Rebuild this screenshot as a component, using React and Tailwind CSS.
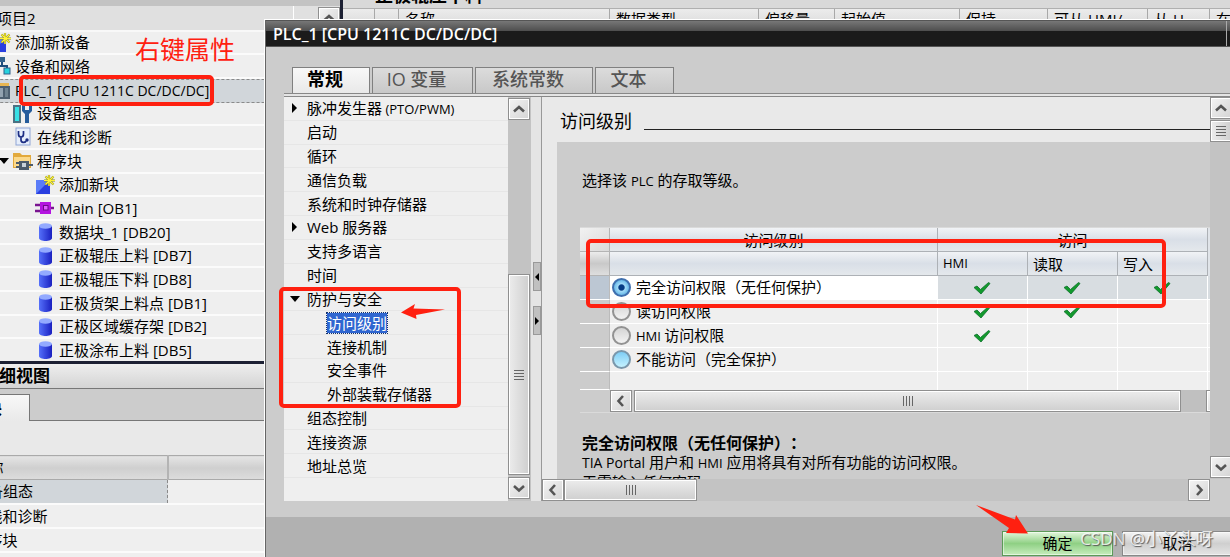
import React, { useState } from "react";
import clsx from "clsx";

const treeItems = [
  { label: "添加新设备", icon: "new", level: 1 },
  { label: "设备和网络", icon: "network", level: 1 },
  { label: "PLC_1 [CPU 1211C DC/DC/DC]", icon: "plc", level: 1, selected: true },
  { label: "设备组态", icon: "config", level: 2 },
  { label: "在线和诊断", icon: "diag", level: 2 },
  { label: "程序块", icon: "folder", level: 2, open: true },
  { label: "添加新块", icon: "new", level: 3 },
  { label: "Main [OB1]", icon: "ob", level: 3 },
  { label: "数据块_1 [DB20]", icon: "db", level: 3 },
  { label: "正极辊压上料 [DB7]", icon: "db", level: 3 },
  { label: "正极辊压下料 [DB8]", icon: "db", level: 3 },
  { label: "正极货架上料点 [DB1]", icon: "db", level: 3 },
  { label: "正极区域缓存架 [DB2]", icon: "db", level: 3 },
  { label: "正极涂布上料 [DB5]", icon: "db", level: 3 },
];

const navItems = [
  { label: "脉冲发生器", latin: "(PTO/PWM)", arrow: "right" },
  { label: "启动" },
  { label: "循环" },
  { label: "通信负载" },
  { label: "系统和时钟存储器" },
  { label: "Web 服务器", arrow: "right" },
  { label: "支持多语言" },
  { label: "时间" },
  { label: "防护与安全", arrow: "down" },
  { label: "访问级别", child: true, selected: true },
  { label: "连接机制", child: true },
  { label: "安全事件", child: true },
  { label: "外部装载存储器", child: true },
  { label: "组态控制" },
  { label: "连接资源" },
  { label: "地址总览" },
];

const levels = [
  { id: "full", label: "完全访问权限（无任何保护）", checks: [true, true, true] },
  { id: "read", label: "读访问权限", checks: [true, true, false] },
  { id: "hmi", latin: "HMI", label: "访问权限", checks: [true, false, false] },
  { id: "none", label: "不能访问（完全保护）", checks: [false, false, false] },
];

const editorColumns = [
  { label: "", width: "w-[32px]" },
  { label: "", width: "w-[24px]" },
  { label: "名称", width: "w-[211px]" },
  { label: "数据类型", width: "w-[149px]" },
  { label: "偏移量", width: "w-[76px]" },
  { label: "起始值", width: "w-[125px]" },
  { label: "保持", width: "w-[88px]" },
  { label: "可从 HMI/", width: "w-[100px]" },
  { label: "从 H", width: "w-[62px]" },
  { label: "在", width: "w-[60px]" },
];

const TreeIcon = ({ type }) => {
  if (type === "new") {
    return (
      <svg width="20" height="20" viewBox="0 0 20 20" className="shrink-0">
        <rect x="1" y="5" width="14" height="14" fill="#2a3fe0" />
        <path d="M1 5h14L1 19z" fill="#5a7cf8" />
        <path d="M14 0v11M9 5.500h11M10.500 1.500l8 8M18.500 1.500l-8 8" stroke="#8a8a20" strokeWidth="2.200" />
        <path d="M14 0v11M9 5.500h11M10.500 1.500l8 8M18.500 1.500l-8 8" stroke="#fff23a" strokeWidth="1.200" />
      </svg>
    );
  }
  if (type === "network") {
    return (
      <svg width="20" height="20" viewBox="0 0 20 20" className="shrink-0">
        <path d="M11 3v7M5 14v-4h11v5" fill="none" stroke="#1d4c7c" strokeWidth="2" />
        <rect x="8" y="1" width="6" height="5" fill="#32608c" />
        <rect x="2" y="12" width="6" height="6" fill="#32608c" />
        <rect x="13" y="12" width="6" height="6" fill="#27d3de" stroke="#32608c" />
      </svg>
    );
  }
  if (type === "plc") {
    return (
      <svg width="20" height="20" viewBox="0 0 20 20" className="shrink-0">
        <path d="M2 5l3-3h13v14H2z" fill="#e8b652" />
        <rect x="7" y="5" width="12" height="13" fill="#4e6070" />
        <rect x="9" y="7" width="3" height="9" fill="#93a3b0" />
        <rect x="14" y="7" width="3" height="9" fill="#708390" />
      </svg>
    );
  }
  if (type === "config") {
    return (
      <svg width="20" height="20" viewBox="0 0 20 20" className="shrink-0">
        <rect x="0" y="1" width="8" height="18" fill="#4b7183" />
        <rect x="2" y="3" width="4" height="14" fill="#37e0e6" />
        <path d="M9 1v6l3 3v9h4v-9l3-3V1l-3 1v4h-4V2z" fill="#245c9c" />
      </svg>
    );
  }
  if (type === "diag") {
    return (
      <svg width="20" height="20" viewBox="0 0 20 20" className="shrink-0">
        <rect x="3" y="1" width="14" height="17" fill="#e6eefb" stroke="#8fa5d6" />
        <path d="M5.500 4v3c0 4 5 4 5 0V4M8 10v3c0 3 4 3 5 1" fill="none" stroke="#1c2d84" strokeWidth="1.700" />
        <circle cx="14" cy="13" r="1.700" fill="#1c2d84" />
      </svg>
    );
  }
  if (type === "folder") {
    return (
      <svg width="20" height="20" viewBox="0 0 20 20" className="shrink-0">
        <path d="M0 2h7l2 2h9v13H0z" fill="#e2a93c" />
        <path d="M1 6h16v10H1z" fill="#fbd98b" />
        <rect x="6" y="10" width="10" height="9" fill="#4c5b6b" />
        <rect x="9" y="12" width="4" height="4" fill="#c8d1da" />
        <path d="M3 12h3M3 16h3M16 14h4" stroke="#4c5b6b" strokeWidth="2" />
      </svg>
    );
  }
  if (type === "ob") {
    return (
      <svg width="20" height="20" viewBox="0 0 20 20" className="shrink-0">
        <path d="M0 7h6M0 13h6M14 10h5" stroke="#7a1490" strokeWidth="2.400" />
        <rect x="5" y="4" width="11" height="12" fill="#b414e0" />
        <rect x="8.500" y="7.500" width="4.500" height="4.500" fill="#e05cff" stroke="#6e0c88" />
      </svg>
    );
  }
  return (
    <svg width="20" height="20" viewBox="0 0 20 20" className="shrink-0">
      <defs>
        <linearGradient id="cylinder">
          <stop offset="0" stopColor="#5570fa" />
          <stop offset="1" stopColor="#1a20c0" />
        </linearGradient>
      </defs>
      <path d="M4 4v12c0 4 13 4 13 0V4z" fill="url(#cylinder)" />
      <ellipse cx="10.500" cy="4" rx="6.500" ry="2.800" fill="#93aaff" />
    </svg>
  );
};

const Check = () => (
  <svg width="18" height="14" viewBox="0 0 18 14" className="mx-auto block">
    <path d="M1 6.500l3-1.500 3.500 3.500L15.500 1.500l1.500 1L8 13z" fill="#129a2c" stroke="#0c6f2c" strokeWidth="0.800" />
  </svg>
);

const Triangle = ({ down }) => (
  <svg width="10" height="10" viewBox="0 0 10 10" className="shrink-0">
    <path d={down ? "M0 2h10L5 8z" : "M2 0v10l5-5z"} fill="#000" />
  </svg>
);

const chevrons = {
  up: "M5 12.500l5-4.500 5 4.500",
  down: "M5 8l5 4.500L15 8",
  left: "M12 5l-4.500 5 4.500 5",
  right: "M8 5l4.500 5L8 15",
};

const ScrollButton = ({ dir, className }) => (
  <button
    type="button"
    aria-label={dir}
    className={clsx(
      "flex h-[22px] w-[22px] shrink-0 items-center justify-center border border-[#8f8f8f] bg-linear-to-br from-[#f4f4f4] to-[#d4d4d4] inset-ring inset-ring-white",
      className
    )}
  >
    <svg width="20" height="20" viewBox="0 0 20 20" className="shrink-0">
      <path d={chevrons[dir]} fill="none" stroke="#555" strokeWidth="2.600" />
    </svg>
  </button>
);

const Grip = ({ vertical }) => (
  <span className={clsx("flex gap-[2px]", vertical ? "flex-col" : "flex-row")}>
    {[0, 1, 2, 3].map((n) => (
      <i key={n} className={clsx("bg-[#666]", vertical ? "h-px w-[10px]" : "h-[10px] w-px")} />
    ))}
  </span>
);

const Thumb = ({ vertical, className }) => (
  <div
    className={clsx(
      "flex items-center justify-center border border-[#8f8f8f] from-[#ececec] to-[#cfcfcf] inset-ring inset-ring-white",
      vertical ? "w-[22px] bg-linear-to-r" : "h-[22px] bg-linear-to-b",
      className
    )}
  >
    <Grip vertical={vertical} />
  </div>
);

const RedBox = ({ className }) => (
  <div className={clsx("pointer-events-none absolute z-10 rounded-[5px] border-4 border-[#ff2010]", className)} />
);

const ProjectTree = () => (
  <aside className="-ml-10 flex w-[380px] shrink-0 flex-col overflow-hidden bg-[#c3c3c3] pt-[6px]">
    <div className="relative h-[355px] shrink-0 overflow-hidden">
      <div className="flex h-[357px] flex-col text-[15px]">
        <div className="flex min-h-0 flex-1 items-center border-b-2 border-[#f8f8f8] bg-[#e0e0e0] pl-[37px]">
          <span className="flex-1">项目2</span>
          <span className="h-full w-[25px] border-l border-white" />
          <ScrollButton dir="up" />
        </div>
        <ul className="flex min-h-0 flex-[14] flex-col">
          {treeItems.map((item) => (
            <li
              key={item.label}
              className={clsx(
                "flex min-h-0 flex-1 items-center whitespace-nowrap",
                item.selected
                  ? "border-y border-dashed border-[#8a8a8a] bg-[#d1d6da] text-[14px] leading-[20px] font-medium"
                  : "border-b-2 border-[#fbfbfb] bg-[#efefef]",
                item.level === 1 && "gap-1 pl-[31px]",
                item.level === 2 && "gap-1 pl-[39px]",
                item.level === 3 && "gap-1 pl-[75px]"
              )}
            >
              {item.level === 2 && (
                <span className="flex w-[10px] shrink-0">{item.open && <Triangle down />}</span>
              )}
              <TreeIcon type={item.icon} />
              <span>{item.label}</span>
            </li>
          ))}
        </ul>
      </div>
      <RedBox className="top-[69px] left-[59px] h-[31px] w-[195px]" />
      <p className="absolute top-[25px] left-[175px] text-[25px] text-[#ff2010]">右键属性</p>
    </div>
    <div className="h-[3px] shrink-0 bg-[#1c2033]" />
    <h2 className="flex h-[25px] shrink-0 items-center border-b border-[#777] bg-linear-to-b from-[#eee] to-[#d4d4d4] pl-[22px] text-[17px] font-bold">
      详细视图
    </h2>
    <div className="flex h-[32px] shrink-0 items-end bg-[#ccc]">
      <button type="button" className="h-[27px] w-[70px] border-t border-r border-[#777] bg-linear-to-b from-[#f8f8f8] to-[#e9e9e9] pl-[12px] text-left text-[15px] font-bold">
        模块
      </button>
      <span className="flex-1 border-b border-[#777]" />
    </div>
    <div className="h-[34px] shrink-0 bg-[#e9e9e9]" />
    <table className="w-full table-fixed border-collapse text-left text-[15px]">
      <thead>
        <tr className="h-[24px] border-y border-[#aaa] bg-linear-to-b from-[#e4e4e4] via-[#cfcfcf] to-[#dcdcdc]">
          <th className="w-[207px] border-r-2 border-[#b4b4b4] p-0 pl-[13px] leading-[20px] font-normal">名称</th>
          <th className="p-0" />
        </tr>
      </thead>
      <tbody>
        {["设备组态", "在线和诊断", "程序块", "工艺对象"].map((name, i) => (
          <tr key={name} className="h-[24px] border-b-2 border-[#fbfbfb] bg-[#efefef]">
            <td className={clsx("p-0 pl-[12px] leading-[20px]", i === 0 && "border border-dashed border-[#8a8a8a] bg-[#d1d6da]")}>
              {name}
            </td>
            <td className="p-0" />
          </tr>
        ))}
      </tbody>
    </table>
  </aside>
);

const Editor = () => (
  <main className="min-w-0 flex-1 overflow-hidden bg-[#efefef]">
    <div className="flex h-[8px] items-end overflow-hidden bg-[#d9d9d9] pl-[32px]">
      <h1 className="pb-[4px] text-[18px] leading-[18px] font-bold whitespace-nowrap">正极辊压下料</h1>
    </div>
    <div className="flex h-[24px] border-t border-[#b0b0b0] bg-linear-to-b from-[#ececec] to-[#d5d5d5] text-[15px]">
      {editorColumns.map((col, i) => (
        <div key={i} className={clsx("shrink-0 border-r border-[#a8a8a8] pl-[6px] leading-[20px] whitespace-nowrap", col.width)}>
          {col.label}
        </div>
      ))}
    </div>
  </main>
);

const SettingsNav = () => (
  <div className="relative flex w-[247px] shrink-0">
    <nav className="flex-1 bg-[#efefef]">
      <ul className="flex h-[381px] flex-col text-[15px]">
        {navItems.map((item) => (
          <li
            key={item.label}
            className={clsx(
              "flex min-h-0 flex-1 items-center border-b border-[#e6e6e6] whitespace-nowrap",
              item.child ? "pl-[43px]" : "pl-[6px]"
            )}
          >
            {!item.child && (
              <span className="flex w-[17px] shrink-0">
                {item.arrow && <Triangle down={item.arrow === "down"} />}
              </span>
            )}
            <a
              href="#"
              className={clsx(
                "leading-[20px]",
                item.selected && "bg-[#2f66d0] text-white outline outline-dotted outline-[#10306c]"
              )}
            >
              {item.label}
              {item.latin && <span className="text-[13px]"> {item.latin}</span>}
            </a>
          </li>
        ))}
      </ul>
    </nav>
    <div className="flex w-[23px] flex-col bg-[#c3c3c3] pt-px pb-[2px]">
      <ScrollButton dir="up" />
      <div className="flex-1" />
      <Thumb vertical className="mb-[2px] h-[201px]" />
      <ScrollButton dir="down" />
    </div>
    <RedBox className="top-[190px] left-[-5px] h-[121px] w-[182px]" />
    <svg width="46" height="18" viewBox="0 0 46 18" className="absolute top-[206px] left-[116px] z-10">
      <path d="M1 9.500L15 1l-1.500 4.500L45 6.500 16 12l.5 4z" fill="#ff2010" />
    </svg>
  </div>
);

const Splitter = () => (
  <div className="flex w-[11px] shrink-0 flex-col gap-[15px] border-r border-[#999] bg-[#e4e4e4] pt-[165px] pl-[2px]">
    <button type="button" aria-label="collapse" className="h-[29px] w-[8px] border border-[#999] bg-[#c0c0c0]">
      <svg width="6" height="8" viewBox="0 0 6 8"><path d="M5 0v8L1 4z" /></svg>
    </button>
    <button type="button" aria-label="expand" className="h-[29px] w-[8px] border border-[#999] bg-[#c0c0c0]">
      <svg width="6" height="8" viewBox="0 0 6 8"><path d="M1 0v8l4-4z" /></svg>
    </button>
  </div>
);

const headCell =
  "border-r border-[#adb1b6] bg-linear-to-b from-[#f1f3f6] via-[#d9dfe7] to-[#e4e8ec] p-0 font-normal";

const AccessTable = () => {
  const [level, setLevel] = useState("full");

  return (
    <div className="relative ml-[23px] border-y border-[#dadada] text-[15px]">
      <table className="w-full table-fixed border-separate border-spacing-0">
        <colgroup>
          <col className="w-[30px]" />
          <col />
          <col className="w-[90px]" />
          <col className="w-[90px]" />
          <col className="w-[90px]" />
          <col className="w-[2px]" />
        </colgroup>
        <thead>
          <tr className="h-[24px]">
            <th className="border-r border-b border-[#b4b4b4] bg-linear-to-br from-[#f2f2f2] to-[#dadada] p-0" />
            <th className={clsx(headCell, "border-b leading-[20px]")}>访问级别</th>
            <th colSpan={3} className={clsx(headCell, "border-b leading-[20px]")}>访问</th>
            <th className="bg-[#e0e4e9] p-0" />
          </tr>
          <tr className="h-[24px] text-left">
            <th className="border-r border-b border-[#b4b4b4] bg-linear-to-b from-[#ececec] via-[#c9c9c9] to-[#dedede] p-0" />
            <th className={clsx(headCell, "border-b")} />
            <th className={clsx(headCell, "border-b pl-[5px] text-[13px]")}>HMI</th>
            <th className={clsx(headCell, "border-b pl-[5px] leading-[20px]")}>读取</th>
            <th className={clsx(headCell, "border-b pl-[5px] leading-[20px]")}>写入</th>
            <th className="bg-[#e0e4e9] p-0" />
          </tr>
        </thead>
        <tbody>
          {levels.map((row) => {
            const active = row.id === level;
            return (
              <tr key={row.id} className={clsx("h-[24px]", active ? "bg-[#d8dde1]" : "bg-[#efefef]")}>
                <td className={clsx("border-r border-b border-r-[#bbb] border-b-white p-0", active ? "bg-[#bcc7d3]" : "bg-[#ccc]")} />
                <td className={clsx("border-r border-b border-white p-0", active && "bg-white")}>
                  <label className="flex h-[23px] items-center gap-[5px] pl-[2px] whitespace-nowrap">
                    <input
                      type="radio"
                      name="access-level"
                      checked={active}
                      onChange={() => setLevel(row.id)}
                      className={clsx(
                        "h-[19px] w-[19px] shrink-0 appearance-none rounded-full border-2",
                        active && "border-[#3f6fae] bg-radial from-[#063c84] from-25% via-[#a4dcf8] via-35% to-[#2b9bd8]",
                        !active && row.id === "none" && "border-[#7a97ab] bg-linear-to-b from-[#7ecdf5] to-[#c4f2ff]",
                        !active && row.id !== "none" && "border-[#929292] bg-linear-to-b from-[#d4d4d4] to-[#f2f2f2]"
                      )}
                    />
                    <span>
                      {row.latin && <span className="text-[13px]">{row.latin} </span>}
                      {row.label}
                    </span>
                  </label>
                </td>
                {row.checks.map((on, i) => (
                  <td key={i} className="border-r border-b border-white p-0">
                    {on && <Check />}
                  </td>
                ))}
                <td className="border-b border-white p-0" />
              </tr>
            );
          })}
          <tr className="h-[18px] bg-[#efefef]">
            <td className="border-r border-b border-r-[#bbb] border-b-white bg-[#ccc] p-0" />
            <td className="border-r border-white p-0" />
            <td className="border-r border-white p-0" />
            <td className="border-r border-white p-0" />
            <td className="border-r border-white p-0" />
            <td className="p-0" />
          </tr>
        </tbody>
      </table>
      <div className="flex overflow-hidden pl-[30px]">
        <ScrollButton dir="left" />
        <Thumb className="ml-[2px] flex-1" />
        <div className="w-[25px] bg-[#c0c0c0]" />
        <ScrollButton dir="right" className="-mr-[18px]" />
      </div>
      <RedBox className="top-[11px] right-[44px] left-[6px] h-[69px]" />
    </div>
  );
};

const AccessPanel = () => (
  <section className="flex min-w-0 flex-1 flex-col">
    <div className="flex min-h-0 flex-1">
      <div className="flex min-w-0 flex-1 flex-col overflow-hidden bg-[#e9e9e9]">
        <div className="flex h-[45px] shrink-0 items-center gap-3 pt-[4px] pl-[18px]">
          <h2 className="text-[18px]">访问级别</h2>
          <hr className="mt-[16px] flex-1 border-[#222]" />
        </div>
        <div className="ml-[15px] min-h-0 flex-1 overflow-hidden bg-[#ccc]">
          <p className="pt-[28px] pb-[36px] pl-[25px] text-[15px] leading-[20px]">
            选择该 <span className="text-[13px]">PLC</span> 的存取等级。
          </p>
          <AccessTable />
          <div className="pt-[21px] pl-[25px] text-[15px] leading-[19px] whitespace-nowrap">
            <h3 className="text-[16px] font-bold [text-spacing-trim:space-all]">完全访问权限（无任何保护）：</h3>
            <p>
              <span className="text-[14px]">TIA Portal</span> 用户和 <span className="text-[13px]">HMI</span> 应用将具有对所有功能的访问权限。
            </p>
            <p>无需输入任何密码</p>
          </div>
        </div>
      </div>
      <div className="flex w-[20px] shrink-0 flex-col overflow-hidden bg-[#c3c3c3]">
        <ScrollButton dir="up" />
        <Thumb vertical className="mt-px h-[22px]" />
        <div className="flex-1" />
        <ScrollButton dir="down" className="mb-px" />
      </div>
    </div>
    <div className="mr-[20px] flex h-[22px] shrink-0 bg-[#c3c3c3]">
      <ScrollButton dir="left" />
      <Thumb className="w-[133px]" />
      <div className="flex-1" />
      <ScrollButton dir="right" />
    </div>
  </section>
);

const tabs = [
  { label: "常规", width: "w-[78px]" },
  { label: "IO 变量", width: "w-[101px]" },
  { label: "系统常数", width: "w-[118px]" },
  { label: "文本", width: "w-[79px]" },
];

const PropertiesDialog = () => (
  <div
    role="dialog"
    aria-label="PLC_1 [CPU 1211C DC/DC/DC]"
    className="absolute top-[19px] right-0 bottom-0 left-[264px] flex flex-col border-t border-l border-white bg-[#ccc]"
  >
    <div className="flex min-h-0 flex-1 flex-col border-l border-[#666]">
      <header className="flex h-[27px] shrink-0 items-center justify-between border-y border-[#555] bg-linear-to-b from-[#777] from-0% via-[#505050] via-38% to-[#1b1b1b] to-40% pr-[3px] pl-[7px]">
        <h2 className="text-[16px] leading-[20px] font-semibold text-white">PLC_1 [CPU 1211C DC/DC/DC]</h2>
        <span className="h-full w-px bg-[#aaa]" />
      </header>
      <div role="tablist" className="flex shrink-0 gap-[2px] pt-[20px] pl-[26px]">
        {tabs.map((tab, i) => (
          <button
            key={tab.label}
            type="button"
            role="tab"
            aria-selected={i === 0}
            className={clsx(
              "h-[26px] border border-b-0 border-[#808080] pr-[12px] pb-[3px] text-[18px] leading-[22px]",
              tab.width,
              i === 0
                ? "bg-linear-to-b from-[#f8f8f8] to-[#e9e9e9] font-bold text-black"
                : "bg-linear-to-b from-[#dcdcdc] to-[#c8c8c8] font-medium text-[#555]"
            )}
          >
            {tab.label}
          </button>
        ))}
      </div>
      <div className="ml-[18px] h-[4px] shrink-0 border-y border-[#888] bg-[#e4e4e4]" />
      <div className="flex min-h-0 flex-1 pl-[18px]">
        <SettingsNav />
        <Splitter />
        <AccessPanel />
      </div>
      <footer className="mt-[16px] flex h-[40px] shrink-0 items-start justify-end gap-[9px] overflow-hidden bg-[#b1b1b1] pt-[14px] text-[15px]">
        <button type="button" className="h-[25px] w-[111px] border border-[#5c9a58] bg-linear-to-b from-[#e2f6dc] via-[#8fd084] to-[#c6edbd] inset-ring inset-ring-white/50">
          确定
        </button>
        <button type="button" className="-mr-[3px] h-[25px] w-[111px] border border-[#888] bg-linear-to-b from-[#f4f4f4] via-[#cfcfcf] to-[#e4e4e4] inset-ring inset-ring-white/50">
          取消
        </button>
      </footer>
    </div>
    <svg width="52" height="30" viewBox="0 0 52 30" className="absolute right-[202px] bottom-[22px] z-10">
      <path d="M0 0l39 14.500L40 10l12 18.500L30 28l3-5z" fill="#ff2010" />
    </svg>
    <p className="pointer-events-none absolute right-[17px] bottom-[6px] text-[17px] text-white/80 text-shadow-[1px_1px_1px_#555]">
      CSDN @小丫头呀
    </p>
  </div>
);

const App = () => (
  <div className="relative flex h-screen overflow-hidden bg-[#efefef] font-['Open_Sans','Noto_Sans_CJK_SC',sans-serif] text-black">
    <ProjectTree />
    <div className="w-[3px] shrink-0 bg-[#1c2033]" />
    <Editor />
    <PropertiesDialog />
  </div>
);

export default App;
